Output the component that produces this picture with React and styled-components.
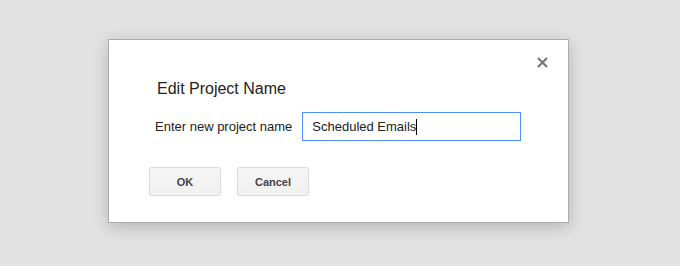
import React from "react";
import styled, { createGlobalStyle } from "styled-components";

const Global = createGlobalStyle`
  html, body { margin: 0; padding: 0; }
  body {
    background: #e2e2e2;
    font-family: Arial, "Liberation Sans", sans-serif;
    width: 680px;
    height: 266px;
    overflow: hidden;
  }
`;

const Page = styled.div`
  padding: 39px 0 0 108px;
`;

const Dialog = styled.div`
  position: relative;
  box-sizing: border-box;
  width: 461px;
  background: #fff;
  border: 1px solid #acacac;
  box-shadow: 0 4px 16px rgba(0, 0, 0, 0.2);
  padding: 30px 40px 26px;
  display: flex;
  flex-direction: column;
`;

const Close = styled.button`
  position: absolute;
  top: 16px;
  right: 20px;
  width: 12px;
  height: 12px;
  padding: 0;
  border: 0;
  background: transparent;
  display: flex;
  align-items: center;
  justify-content: center;
  cursor: pointer;
`;

const Title = styled.h1`
  margin: 10px 0 0 8px;
  font-size: 16px;
  line-height: 18px;
  font-weight: normal;
  color: #222;
`;

const Row = styled.div`
  display: flex;
  align-items: center;
  gap: 10px;
  margin: 14px 0 0 6px;
`;

const Label = styled.label`
  font-size: 13px;
  color: #222;
  white-space: nowrap;
`;

const Field = styled.div`
  position: relative;
  box-sizing: border-box;
  width: 219px;
  height: 29px;
  border: 1px solid #4d90fe;
  display: flex;
  align-items: center;
  padding-left: 9px;
  font-size: 13px;
  color: #222;
`;

const Caret = styled.span`
  display: inline-block;
  width: 1px;
  height: 16px;
  background: #000;
  vertical-align: middle;
`;

const Buttons = styled.div`
  display: flex;
  gap: 16px;
  margin-top: 26px;
`;

const Button = styled.button`
  box-sizing: border-box;
  min-width: 72px;
  height: 29px;
  padding: 0 8px;
  border: 1px solid #dcdcdc;
  border-radius: 2px;
  background: linear-gradient(#f5f5f5, #f1f1f1);
  color: #444;
  font-family: Arial, "Liberation Sans", sans-serif;
  font-size: 11px;
  font-weight: bold;
  cursor: pointer;
`;

export default function App() {
  return (
    <>
      <Global />
      <Page>
        <Dialog role="dialog">
          <Close aria-label="Close">
            <svg width="11" height="11" viewBox="0 0 11 11">
              <path d="M1 1 L10 10 M10 1 L1 10" stroke="#777" strokeWidth="2.2" strokeLinecap="butt" />
            </svg>
          </Close>
          <Title>Edit Project Name</Title>
          <Row>
            <Label>Enter new project name</Label>
            <Field>
              Scheduled Emails
              <Caret />
            </Field>
          </Row>
          <Buttons>
            <Button>OK</Button>
            <Button>Cancel</Button>
          </Buttons>
        </Dialog>
      </Page>
    </>
  );
}
